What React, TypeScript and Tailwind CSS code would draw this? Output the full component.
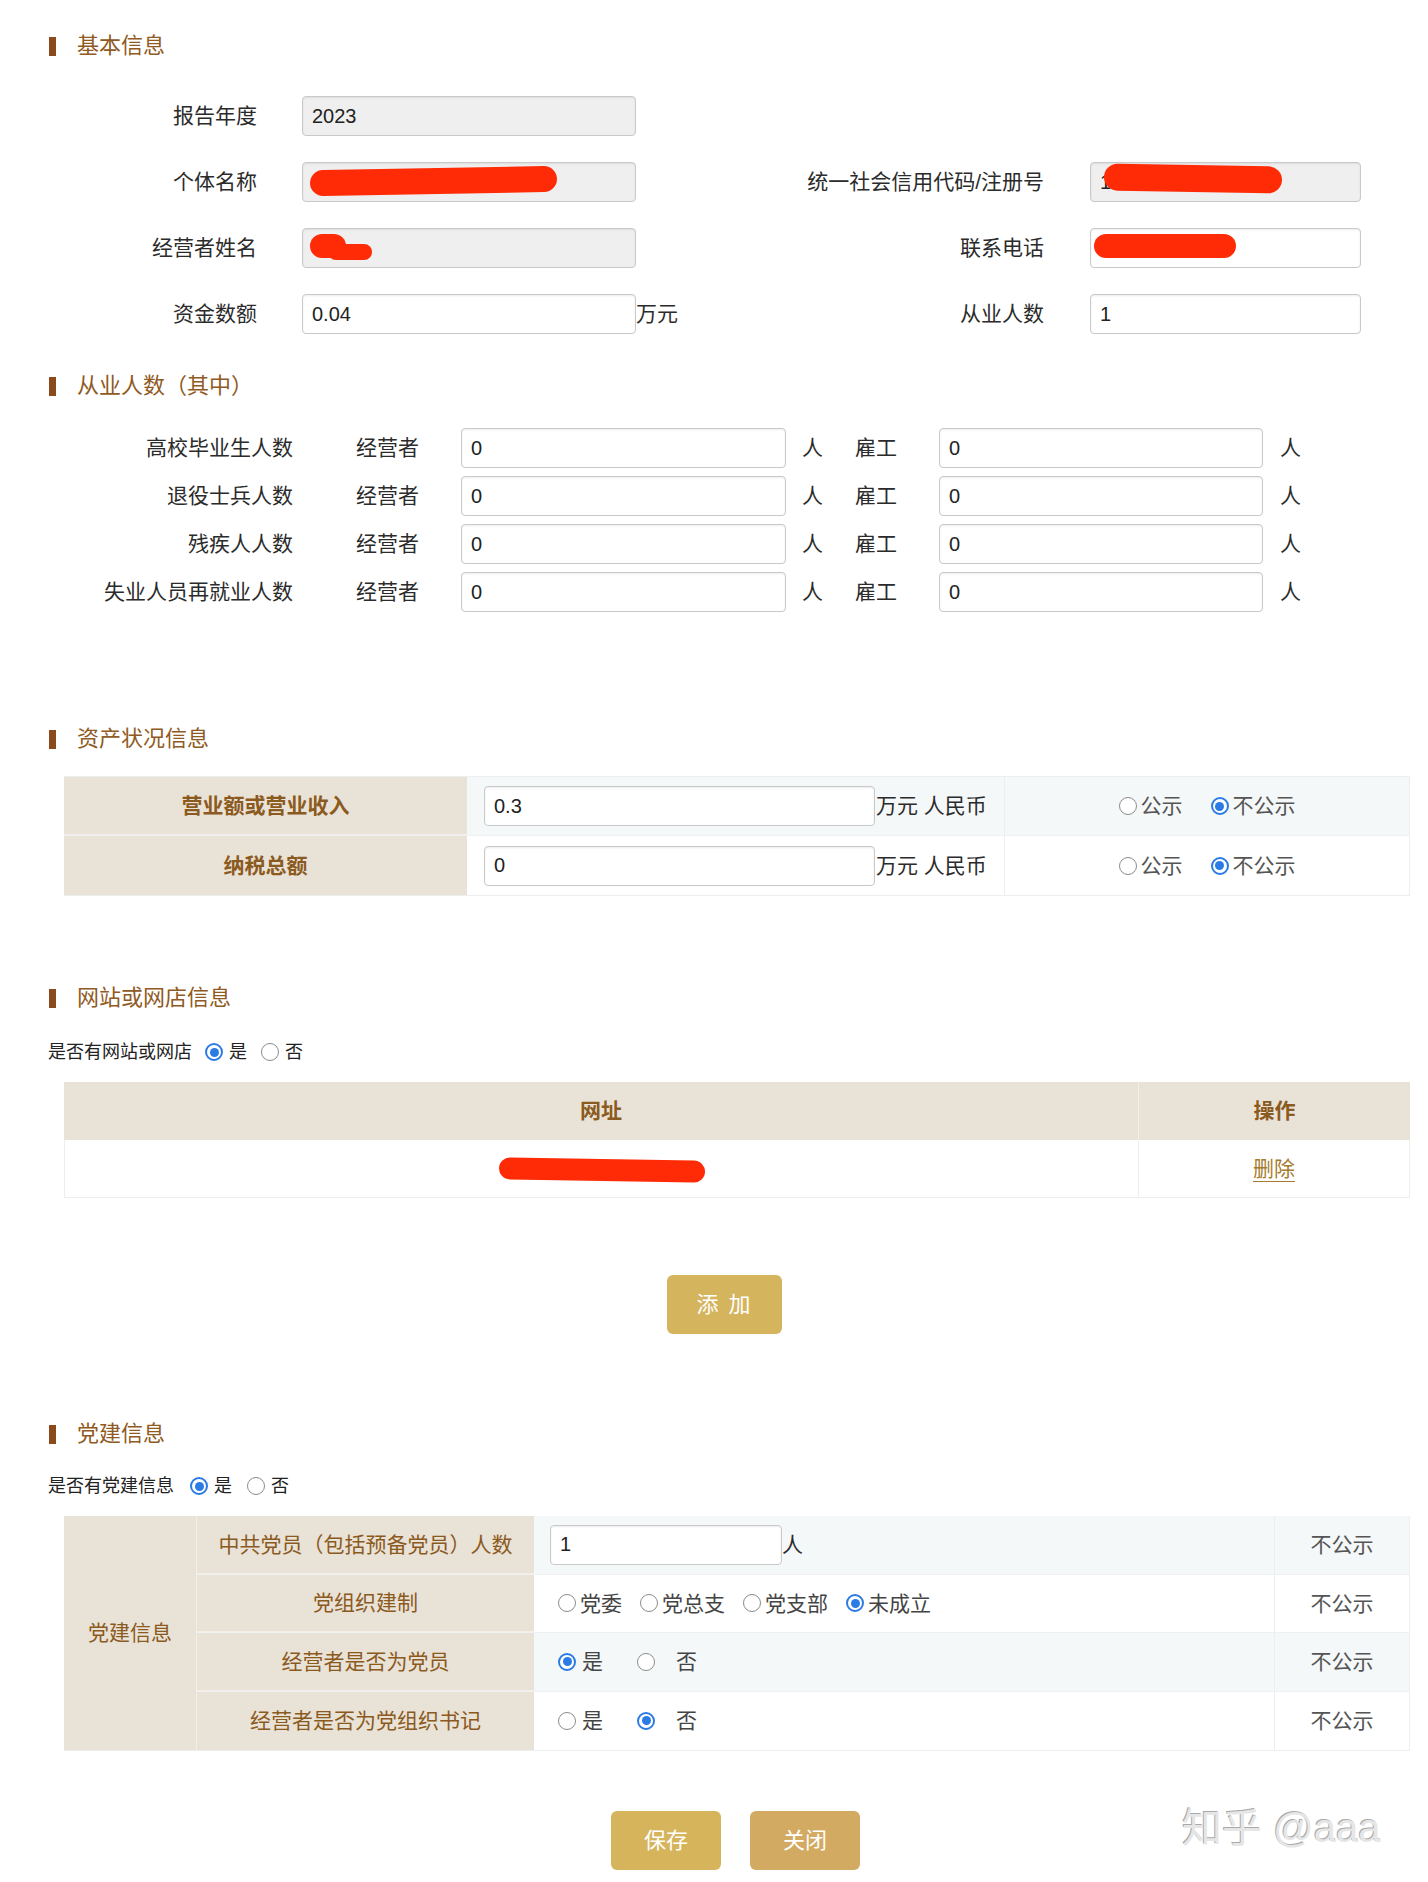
import React from 'react';

const inputCls =
  "h-[40px] w-full rounded-[4px] border border-[#c9c9c9] px-[9px] text-[20px] text-[#222] shadow-[inset_0_1px_2px_rgba(0,0,0,0.08)] outline-none";

const Heading = ({ title }: { title: string }) => (
  <div className="flex items-center h-[28px] pl-[49px]">
    <span className="w-[7px] h-[19px] bg-[#8b4a1c]" />
    <span className="ml-[21px] text-[22px] text-[#8f5a24] leading-none">{title}</span>
  </div>
);

// red scribble used to hide private data
const Blob = ({ cls }: { cls: string }) => (
  <span className={`absolute rounded-full bg-[#ff2b06] ${cls}`} />
);

const Radio = ({ checked }: { checked?: boolean }) =>
  checked ? (
    <span className="w-[18px] h-[18px] rounded-full border-[2px] border-[#2b7be4] bg-white flex items-center justify-center shrink-0">
      <span className="w-[9px] h-[9px] rounded-full bg-[#2b7be4]" />
    </span>
  ) : (
    <span className="w-[18px] h-[18px] rounded-full border-[1.5px] border-[#8c8c8c] bg-white shrink-0" />
  );

const Opt = ({ label, checked, gap = 'ml-[4px]' }: { label: string; checked?: boolean; gap?: string }) => (
  <span className="flex items-center">
    <Radio checked={checked} />
    <span className={gap}>{label}</span>
  </span>
);

const employRows = ['高校毕业生人数', '退役士兵人数', '残疾人人数', '失业人员再就业人数'];

export default function App() {
  return (
    <div className="relative w-[1428px] min-h-[1882px] bg-white pt-[32px] font-['Liberation_Sans','Noto_Sans_CJK_SC',sans-serif] text-[#2b2b2b]">
      {/* 基本信息 */}
      <Heading title="基本信息" />
      <div className="mt-[23px] text-[21px]">
        <div className="flex items-center h-[66px]">
          <div className="w-[257px] text-right">报告年度</div>
          <div className="ml-[45px] w-[334px]">
            <input readOnly value="2023" className={`${inputCls} bg-[#efefef]`} />
          </div>
        </div>
        <div className="flex items-center h-[66px]">
          <div className="w-[257px] text-right">个体名称</div>
          <div className="ml-[45px] w-[334px] relative">
            <input readOnly value="" className={`${inputCls} bg-[#efefef]`} />
            <Blob cls="left-[8px] top-[6px] w-[247px] h-[26px] -rotate-1" />
          </div>
          <div className="w-[408px] text-right">统一社会信用代码/注册号</div>
          <div className="ml-[46px] w-[271px] relative">
            <input readOnly value="1" className={`${inputCls} bg-[#efefef]`} />
            <Blob cls="left-[14px] top-[3px] w-[178px] h-[27px] rotate-1" />
          </div>
        </div>
        <div className="flex items-center h-[66px]">
          <div className="w-[257px] text-right">经营者姓名</div>
          <div className="ml-[45px] w-[334px] relative">
            <input readOnly value="" className={`${inputCls} bg-[#efefef]`} />
            <Blob cls="left-[8px] top-[6px] w-[36px] h-[24px]" />
            <Blob cls="left-[26px] top-[16px] w-[44px] h-[16px]" />
          </div>
          <div className="w-[408px] text-right">联系电话</div>
          <div className="ml-[46px] w-[271px] relative">
            <input readOnly value="" className={`${inputCls} bg-white`} />
            <Blob cls="left-[4px] top-[6px] w-[142px] h-[24px]" />
          </div>
        </div>
        <div className="flex items-center h-[66px]">
          <div className="w-[257px] text-right">资金数额</div>
          <div className="ml-[45px] w-[334px]">
            <input readOnly value="0.04" className={`${inputCls} bg-white`} />
          </div>
          <div className="w-[408px] flex justify-between">
            <span>万元</span>
            <span>从业人数</span>
          </div>
          <div className="ml-[46px] w-[271px]">
            <input readOnly value="1" className={`${inputCls} bg-white`} />
          </div>
        </div>
      </div>

      {/* 从业人数（其中） */}
      <div className="mt-[25px]">
        <Heading title="从业人数（其中）" />
      </div>
      <div className="mt-[24px] text-[21px]">
        {employRows.map((label) => (
          <div key={label} className="flex items-center h-[48px]">
            <div className="w-[293px] text-right">{label}</div>
            <div className="ml-[63px] w-[63px]">经营者</div>
            <div className="ml-[42px] w-[325px]">
              <input readOnly value="0" className={`${inputCls} bg-white`} />
            </div>
            <div className="ml-[16px] w-[21px]">人</div>
            <div className="ml-[32px] w-[42px]">雇工</div>
            <div className="ml-[42px] w-[324px]">
              <input readOnly value="0" className={`${inputCls} bg-white`} />
            </div>
            <div className="ml-[17px]">人</div>
          </div>
        ))}
      </div>

      {/* 资产状况信息 */}
      <div className="mt-[109px]">
        <Heading title="资产状况信息" />
      </div>
      <div className="mt-[23px] ml-[64px] w-[1346px] border-t border-r border-b border-[#eceef0] text-[21px]">
        {[
          { label: '营业额或营业收入', value: '0.3', bg: 'bg-[#f5f8f9]' },
          { label: '纳税总额', value: '0', bg: 'bg-white' },
        ].map((r, i) => (
          <div key={r.label} className={`flex h-[59px] ${i === 0 ? 'border-b border-[#eef0f2]' : ''}`}>
            <div className={`w-[403px] bg-[#e9e2d6] flex items-center justify-center font-bold text-[#8b5a1e] ${i === 0 ? 'border-b border-[#f3eee7]' : ''}`}>
              {r.label}
            </div>
            <div className={`w-[537px] flex items-center pl-[17px] ${r.bg}`}>
              <div className="w-[391px]">
                <input readOnly value={r.value} className={`${inputCls} bg-white`} />
              </div>
              <span className="ml-[1px]">万元 人民币</span>
            </div>
            <div className={`flex-1 flex items-center justify-center gap-[28px] border-l border-[#eceef0] text-[#555] ${r.bg}`}>
              <Opt label="公示" />
              <Opt label="不公示" checked />
            </div>
          </div>
        ))}
      </div>

      {/* 网站或网店信息 */}
      <div className="mt-[88px]">
        <Heading title="网站或网店信息" />
      </div>
      <div className="mt-[25px] h-[30px] pl-[48px] flex items-center text-[18px] text-[#222]">
        <span>是否有网站或网店</span>
        <span className="ml-[13px] flex items-center">
          <Radio checked />
          <span className="ml-[6px]">是</span>
        </span>
        <span className="ml-[14px] flex items-center">
          <Radio />
          <span className="ml-[6px]">否</span>
        </span>
      </div>
      <div className="mt-[15px] ml-[64px] w-[1346px] text-[21px]">
        <div className="flex h-[58px] bg-[#e9e2d6] font-bold text-[#8b5a1e]">
          <div className="w-[1075px] flex items-center justify-center border-r border-[#f3eee7]">网址</div>
          <div className="flex-1 flex items-center justify-center">操作</div>
        </div>
        <div className="flex h-[58px] border-l border-r border-b border-[#eceef0] bg-white">
          <div className="w-[1074px] relative border-r border-[#eceef0]">
            <Blob cls="left-[434px] top-[19px] w-[206px] h-[22px] rotate-1" />
          </div>
          <div className="flex-1 flex items-center justify-center">
            <span className="text-[#a47c2e] underline underline-offset-[5px] decoration-[1px]">删除</span>
          </div>
        </div>
      </div>
      <div className="mt-[77px] ml-[667px]">
        <button className="w-[115px] h-[59px] rounded-[6px] bg-[#d5b45e] text-white text-[22px] tracking-[2px]">
          添 加
        </button>
      </div>

      {/* 党建信息 */}
      <div className="mt-[86px]">
        <Heading title="党建信息" />
      </div>
      <div className="mt-[23px] h-[30px] pl-[48px] flex items-center text-[18px] text-[#222]">
        <span>是否有党建信息</span>
        <span className="ml-[16px] flex items-center">
          <Radio checked />
          <span className="ml-[6px]">是</span>
        </span>
        <span className="ml-[15px] flex items-center">
          <Radio />
          <span className="ml-[6px]">否</span>
        </span>
      </div>
      <div className="mt-[15px] ml-[64px] w-[1346px] flex text-[21px] border-r border-b border-[#eceef0]">
        <div className="w-[133px] bg-[#e9e2d6] flex items-center justify-center text-[#8b5a1e] border-r border-[#f3eee7]">
          党建信息
        </div>
        <div className="flex-1 flex flex-col">
          {/* row 1 */}
          <div className="flex h-[58.5px] border-b border-[#eef0f2]">
            <div className="w-[337px] bg-[#e9e2d6] flex items-center justify-center text-[#8b5a1e] border-b border-[#f3eee7]">
              中共党员（包括预备党员）人数
            </div>
            <div className="w-[740px] bg-[#f5f8f9] flex items-center pl-[16px]">
              <div className="w-[232px]">
                <input readOnly value="1" className={`${inputCls} bg-white`} />
              </div>
              <span>人</span>
            </div>
            <div className="flex-1 bg-[#f5f8f9] flex items-center justify-center border-l border-[#eceef0] text-[#555]">不公示</div>
          </div>
          {/* row 2 */}
          <div className="flex h-[58.5px] border-b border-[#eef0f2]">
            <div className="w-[337px] bg-[#e9e2d6] flex items-center justify-center text-[#8b5a1e] border-b border-[#f3eee7]">
              党组织建制
            </div>
            <div className="w-[740px] bg-white flex items-center pl-[24px] gap-[18px] text-[#444]">
              <Opt label="党委" />
              <Opt label="党总支" />
              <Opt label="党支部" />
              <Opt label="未成立" checked />
            </div>
            <div className="flex-1 bg-white flex items-center justify-center border-l border-[#eceef0] text-[#555]">不公示</div>
          </div>
          {/* row 3 */}
          <div className="flex h-[58.5px] border-b border-[#eef0f2]">
            <div className="w-[337px] bg-[#e9e2d6] flex items-center justify-center text-[#8b5a1e] border-b border-[#f3eee7]">
              经营者是否为党员
            </div>
            <div className="w-[740px] bg-[#f5f8f9] flex items-center pl-[24px] gap-[34px] text-[#444]">
              <Opt label="是" checked gap="ml-[6px]" />
              <Opt label="否" gap="ml-[21px]" />
            </div>
            <div className="flex-1 bg-[#f5f8f9] flex items-center justify-center border-l border-[#eceef0] text-[#555]">不公示</div>
          </div>
          {/* row 4 */}
          <div className="flex h-[58.5px]">
            <div className="w-[337px] bg-[#e9e2d6] flex items-center justify-center text-[#8b5a1e]">
              经营者是否为党组织书记
            </div>
            <div className="w-[740px] bg-white flex items-center pl-[24px] gap-[34px] text-[#444]">
              <Opt label="是" gap="ml-[6px]" />
              <Opt label="否" checked gap="ml-[21px]" />
            </div>
            <div className="flex-1 bg-white flex items-center justify-center border-l border-[#eceef0] text-[#555]">不公示</div>
          </div>
        </div>
      </div>

      {/* actions */}
      <div className="mt-[60px] ml-[611px] flex gap-[29px]">
        <button className="w-[110px] h-[59px] rounded-[6px] bg-[#d6b45c] text-white text-[22px]">保存</button>
        <button className="w-[110px] h-[59px] rounded-[6px] bg-[#d3aa62] text-white text-[22px]">关闭</button>
      </div>

      {/* watermark */}
      <div className="absolute left-[1182px] top-[1798px] text-[40px] text-[#e6e6e6] [text-shadow:-1px_-1px_0_#a9a9a9] select-none">
        知乎 @aaa
      </div>
    </div>
  );
}
